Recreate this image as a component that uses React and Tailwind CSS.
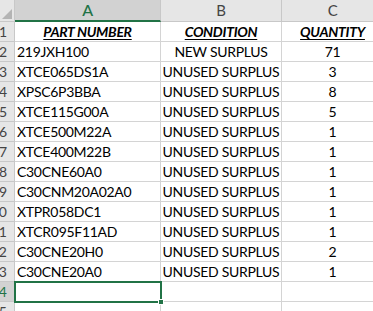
import React from 'react'

const rows = [
    { part: '219JXH100', cond: 'NEW SURPLUS', qty: '71' },
    { part: 'XTCE065DS1A', cond: 'UNUSED SURPLUS', qty: '3' },
    { part: 'XPSC6P3BBA', cond: 'UNUSED SURPLUS', qty: '8' },
    { part: 'XTCE115G00A', cond: 'UNUSED SURPLUS', qty: '5' },
    { part: 'XTCE500M22A', cond: 'UNUSED SURPLUS', qty: '1' },
    { part: 'XTCE400M22B', cond: 'UNUSED SURPLUS', qty: '1' },
    { part: 'C30CNE60A0', cond: 'UNUSED SURPLUS', qty: '1' },
    { part: 'C30CNM20A02A0', cond: 'UNUSED SURPLUS', qty: '1' },
    { part: 'XTPR058DC1', cond: 'UNUSED SURPLUS', qty: '1' },
    { part: 'XTCR095F11AD', cond: 'UNUSED SURPLUS', qty: '1' },
    { part: 'C30CNE20H0', cond: 'UNUSED SURPLUS', qty: '2' },
    { part: 'C30CNE20A0', cond: 'UNUSED SURPLUS', qty: '1' },
]

const cols = 'grid grid-cols-[15px_146px_121px_102px]'
const cell = 'h-[20px] border-r border-b border-[#d4d4d4] flex items-center overflow-hidden whitespace-nowrap'
const rowHead = 'h-[20px] border-r border-b border-[#c8c8c8] bg-[#e6e6e6] flex items-center justify-end pr-[7px] overflow-hidden whitespace-nowrap text-[#444] tracking-normal'

const App = () => {
    return (
        <div className="w-[373px] h-[311px] overflow-hidden bg-white text-[14px] tracking-[-0.3px] leading-none text-black font-['Lato',sans-serif]">
            <div className="relative w-[384px]">
                {/* column letters */}
                <div className={`${cols} h-[22px]`}>
                    <div className="relative border-r border-b border-[#c8c8c8] bg-[#e6e6e6]">
                        <div className="absolute right-[2px] bottom-[2px] w-0 h-0 border-l-[10px] border-l-transparent border-b-[10px] border-b-[#b4b4b4]" />
                    </div>
                    <div className="bg-[#d2d2d2] border-r border-[#c8c8c8] border-b-2 border-b-[#217346] flex items-center justify-center text-[#217346] text-[16px] font-medium">A</div>
                    <div className="bg-[#e6e6e6] border-r border-b border-[#c8c8c8] flex items-center justify-center text-[#444] text-[15px]">B</div>
                    <div className="bg-[#e6e6e6] border-r border-b border-[#c8c8c8] flex items-center justify-center text-[#444] text-[15px]">C</div>
                </div>

                {/* header row */}
                <div className={cols}>
                    <div className={rowHead}>1</div>
                    <div className={`${cell} justify-center font-bold italic underline underline-offset-2`}>PART NUMBER</div>
                    <div className={`${cell} justify-center font-bold italic underline underline-offset-2`}>CONDITION</div>
                    <div className={`${cell} justify-center font-bold italic underline underline-offset-2`}>QUANTITY</div>
                </div>

                {rows.map((r, i) => (
                    <div key={i} className={cols}>
                        <div className={rowHead}>{i + 2}</div>
                        <div className={`${cell} pl-[2px]`}>{r.part}</div>
                        <div className={`${cell} justify-center`}>{r.cond}</div>
                        <div className={`${cell} justify-center`}>{r.qty}</div>
                    </div>
                ))}

                {/* selected empty row */}
                <div className={cols}>
                    <div className="h-[20px] border-r border-b border-[#c8c8c8] bg-[#d2d2d2] flex items-center justify-end pr-[7px] overflow-hidden tracking-normal text-[#217346]">14</div>
                    <div className={cell} />
                    <div className={cell} />
                    <div className={cell} />
                </div>
                <div className={cols}>
                    <div className={rowHead}>15</div>
                    <div className={cell} />
                    <div className={cell} />
                    <div className={cell} />
                </div>

                {/* active cell */}
                <div className="absolute left-[14px] top-[281px] w-[148px] h-[22px] border-2 border-[#217346]">
                    <div className="absolute -right-[4px] -bottom-[4px] w-[6px] h-[6px] bg-[#217346] border border-white" />
                </div>
            </div>
        </div>
    )
}

export default App
